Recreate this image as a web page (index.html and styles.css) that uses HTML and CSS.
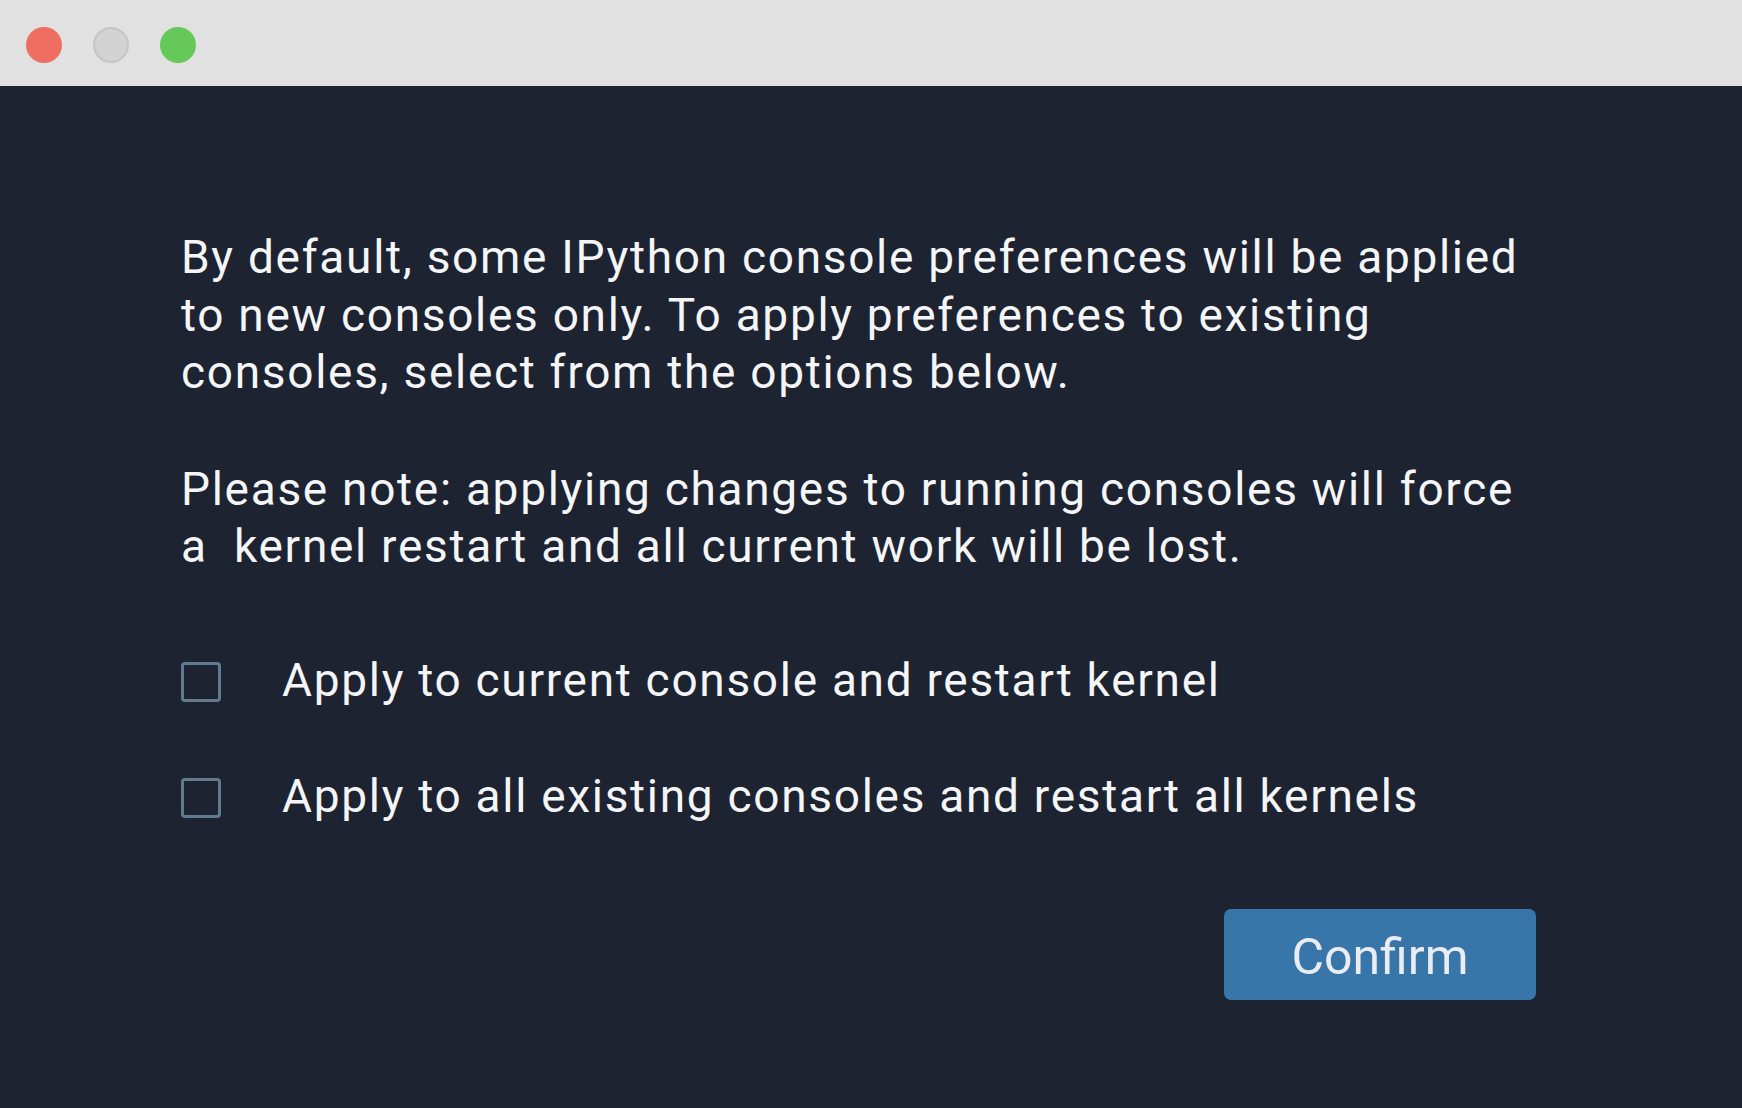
FILE: index.html
```html
<!DOCTYPE html>
<html>
<head>
<meta charset="utf-8">
<link rel="stylesheet" href="styles.css">
</head>
<body>
<div class="window">
  <div class="titlebar">
    <span class="dot dot-close"></span>
    <span class="dot dot-min"></span>
    <span class="dot dot-max"></span>
  </div>
  <div class="content">
    <p class="para">By default, some IPython console preferences will be applied<br>to new consoles only. To apply preferences to existing<br>consoles, select from the options below.</p>
    <p class="para">Please note: applying changes to running consoles will force<br>a&nbsp; kernel restart and all current work will be lost.</p>
    <div class="options">
      <label class="option"><span class="box"></span><span class="label">Apply to current console and restart kernel</span></label>
      <label class="option"><span class="box"></span><span class="label">Apply to all existing consoles and restart all kernels</span></label>
    </div>
    <div class="actions">
      <button class="btn">Confirm</button>
    </div>
  </div>
</div>
</body>
</html>
```
FILE: styles.css
```css
html, body {
  margin: 0;
  padding: 0;
  height: 100%;
}
body {
  background: #1d2330;
  font-family: Roboto, "Noto Sans", sans-serif;
  overflow: hidden;
}
.window {
  display: flex;
  flex-direction: column;
  height: 100%;
}
.titlebar {
  height: 86px;
  box-sizing: border-box;
  padding-top: 3px;
  background: #e1e1e1;
  display: flex;
  align-items: center;
  padding-left: 26px;
  gap: 31px;
  flex-shrink: 0;
}
.dot {
  width: 36px;
  height: 36px;
  border-radius: 50%;
  box-sizing: border-box;
}
.dot-close { background: #ee6e62; }
.dot-min { background: #d3d3d3; border: 2px solid #c5c5c5; }
.dot-max { background: #65c95a; }
.content {
  flex: 1;
  background: #1d2330;
  padding: 143px 206px 0 181px;
  color: #f4f5f7;
}
.para {
  margin: 0 0 59px 0;
  font-size: 46px;
  line-height: 57.5px;
  letter-spacing: 1.7px;
}
.options {
  display: flex;
  flex-direction: column;
  gap: 60px;
  margin-top: 78px;
}
.option {
  display: flex;
  align-items: center;
  gap: 61px;
  height: 56px;
}
.box {
  width: 40px;
  height: 40px;
  box-sizing: border-box;
  border: 3.5px solid #607b8f;
  border-radius: 4px;
  flex-shrink: 0;
}
.label {
  font-size: 46px;
  letter-spacing: 1.7px;
  color: #f4f5f7;
  position: relative;
  top: -2px;
}
.actions {
  display: flex;
  justify-content: flex-end;
  margin-top: 83px;
}
.btn {
  width: 312px;
  height: 91px;
  background: #3875a9;
  border: none;
  border-radius: 7px;
  color: #e9edf2;
  font-family: Roboto, "Noto Sans", sans-serif;
  font-size: 50px;
  padding: 6px 0 0 0;
}
```
